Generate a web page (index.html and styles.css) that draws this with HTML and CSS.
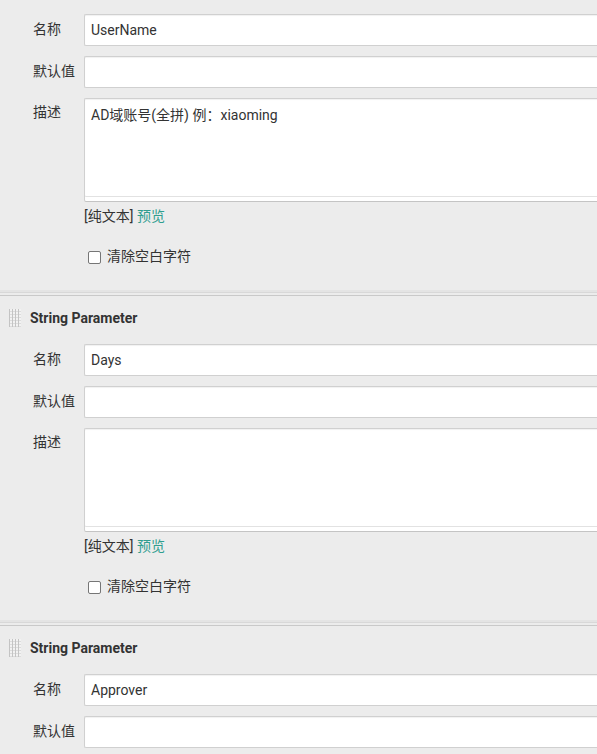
FILE: index.html
```html
<!DOCTYPE html>
<html>
<head>
<meta charset="utf-8">
<link rel="stylesheet" href="styles.css">
</head>
<body>
<div class="page">
  <div class="chunk first">
    <div class="row"><div class="label">名称</div><div class="field"><div class="input">UserName</div></div></div>
    <div class="row"><div class="label">默认值</div><div class="field"><div class="input"></div></div></div>
    <div class="row"><div class="label desc">描述</div><div class="field"><div class="textarea">AD域账号(全拼) 例：xiaoming</div><div class="hint">[纯文本] <span class="link">预览</span></div></div></div>
    <div class="check"><span class="box"></span><span class="check-label">清除空白字符</span></div>
  </div>
  <div class="sep"></div>
  <div class="chunk">
    <div class="header"><span class="grip"></span><span class="title">String Parameter</span></div>
    <div class="row"><div class="label">名称</div><div class="field"><div class="input">Days</div></div></div>
    <div class="row"><div class="label">默认值</div><div class="field"><div class="input"></div></div></div>
    <div class="row"><div class="label desc">描述</div><div class="field"><div class="textarea"></div><div class="hint">[纯文本] <span class="link">预览</span></div></div></div>
    <div class="check"><span class="box"></span><span class="check-label">清除空白字符</span></div>
  </div>
  <div class="sep"></div>
  <div class="chunk">
    <div class="header"><span class="grip"></span><span class="title">String Parameter</span></div>
    <div class="row"><div class="label">名称</div><div class="field"><div class="input">Approver</div></div></div>
    <div class="row"><div class="label">默认值</div><div class="field"><div class="input"></div></div></div>
  </div>
</div>
</body>
</html>
```

FILE: styles.css
```css
html, body {
  margin: 0;
  padding: 0;
}
body {
  background: #ececec;
  font-family: Roboto, "Noto Sans CJK SC", sans-serif;
  font-size: 14px;
  color: #333;
  overflow: hidden;
}
.page {
  width: 597px;
}
.chunk {
  padding-bottom: 28px;
}
.chunk.first {
  padding-top: 14px;
}
.row {
  display: flex;
  align-items: flex-start;
  margin-bottom: 10px;
}
.label {
  width: 51px;
  padding-left: 33px;
  flex: none;
  line-height: 30px;
  color: #333;
}
.label.desc {
  line-height: 28px;
}
.field {
  flex: 1;
  min-width: 0;
}
.input {
  box-sizing: border-box;
  height: 32px;
  margin-right: -10px;
  background: #fff;
  border: 1px solid #d0d0d0;
  border-right: none;
  box-shadow: inset 0 1px 1px rgba(0,0,0,0.06);
  padding: 0 6px;
  line-height: 30px;
  color: #333;
  border-radius: 2px 0 0 2px;
}
.textarea {
  box-sizing: border-box;
  height: 104px;
  margin-right: -10px;
  background: #fff;
  border: 1px solid #d0d0d0;
  border-bottom: 1px solid #c4c4c4;
  border-right: none;
  box-shadow: inset 0 1px 1px rgba(0,0,0,0.06), inset 0 -4px 0 #fff, inset 0 -5px 0 #e2e2e2;
  padding: 6px 6px;
  line-height: 20px;
  color: #333;
  border-radius: 2px 0 0 2px;
}
.hint {
  margin-top: 6px;
  line-height: 16px;
  color: #333;
  font-size: 14px;
}
.link {
  color: #2f9e8f;
}
.check {
  display: flex;
  align-items: center;
  padding-left: 88px;
  margin-top: 24px;
  height: 16px;
}
.box {
  box-sizing: border-box;
  width: 13px;
  height: 13px;
  border: 1px solid #767676;
  border-radius: 2px;
  background: #fff;
  margin-top: 3px;
  margin-right: 6px;
}
.check-label {
  line-height: 16px;
  color: #333;
}
.sep {
  height: 2px;
  border-top: 1px solid #d8d8d8;
  border-bottom: 1px solid #c9c9c9;
  box-shadow: 0 -2px 0 #e4e4e4;
}
.header {
  display: flex;
  align-items: center;
  height: 42px;
  margin-bottom: 6px;
  padding-top: 2px;
  box-sizing: border-box;
}
.grip {
  width: 12px;
  height: 18px;
  margin-left: 9px;
  margin-right: 9px;
  background-color: #f2f2f2;
  background-image:
    repeating-linear-gradient(90deg, #c4c4c4 0 1px, transparent 1px 3px),
    repeating-linear-gradient(0deg, #dcdcdc 0 1px, transparent 1px 3px);
}
.title {
  font-weight: bold;
  font-size: 14px;
  color: #333;
}
```
